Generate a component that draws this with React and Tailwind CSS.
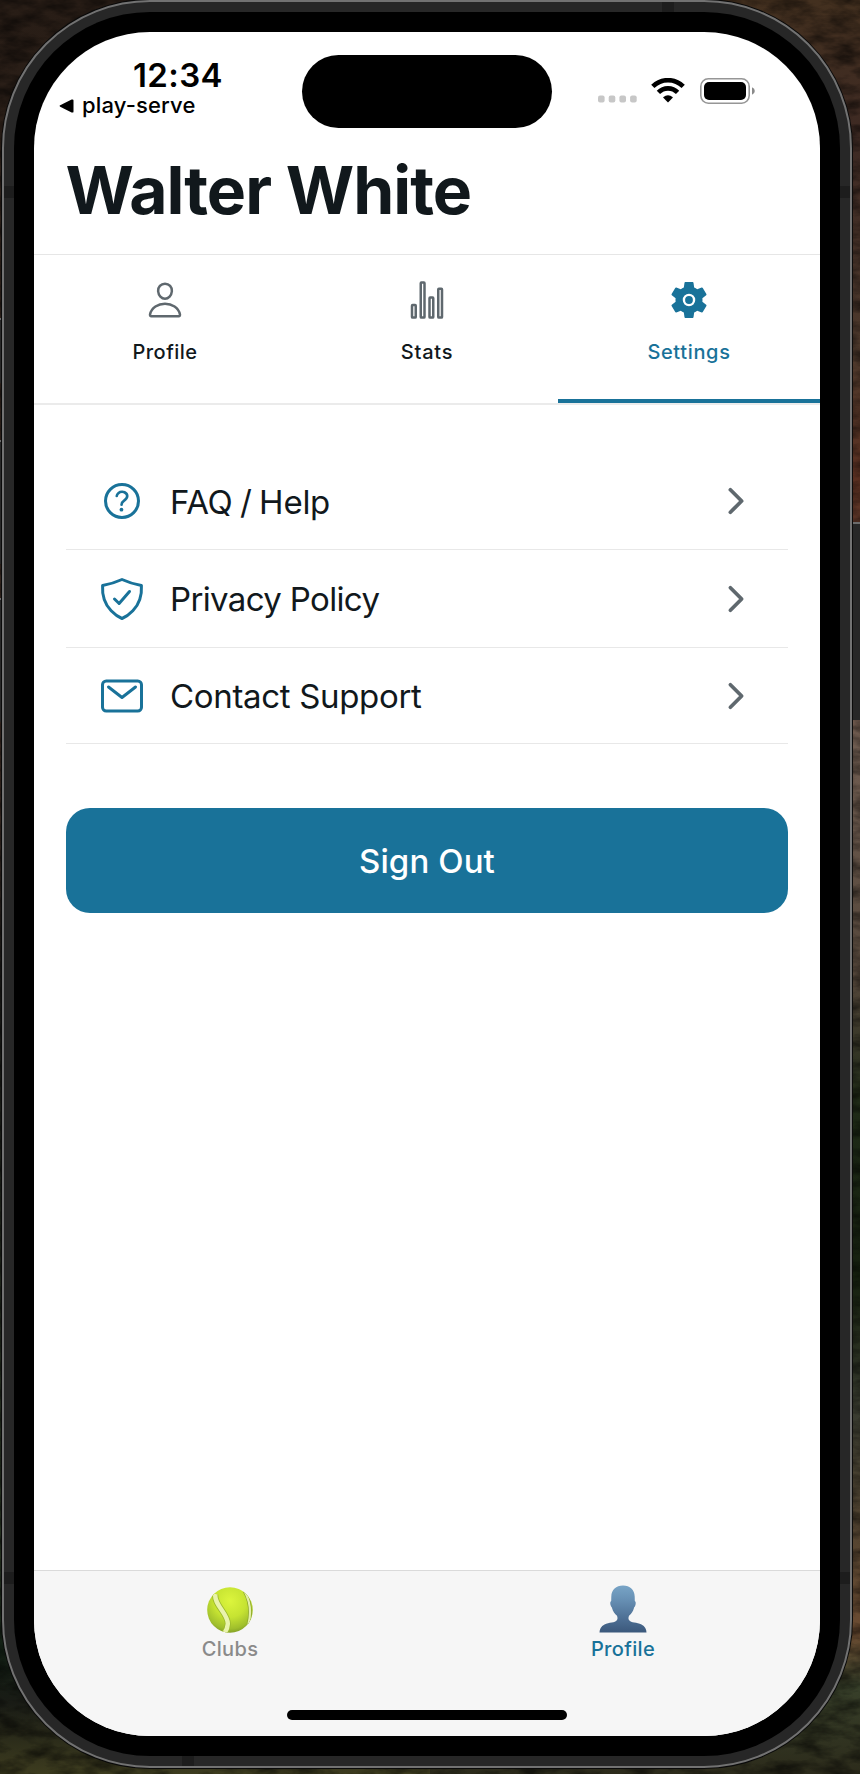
import {
  IoPersonOutline,
  IoStatsChartOutline,
  IoSettingsSharp,
  IoHelpCircleOutline,
  IoShieldCheckmarkOutline,
  IoMailOutline,
  IoChevronForward,
} from "react-icons/io5";

function Wallpaper() {
  return (
    <svg className="absolute inset-0" width="860" height="1774" viewBox="0 0 860 1774">
      <defs>
        <linearGradient id="wallLeft" x1="0" y1="0" x2="0" y2="1">
          <stop offset="0" stopColor="#281d16" />
          <stop offset="0.45" stopColor="#35261f" />
          <stop offset="0.55" stopColor="#171614" />
          <stop offset="0.88" stopColor="#24301f" />
          <stop offset="0.93" stopColor="#121f14" />
          <stop offset="0.96" stopColor="#191b15" />
          <stop offset="1" stopColor="#3d3c1f" />
        </linearGradient>
        <linearGradient id="wallRight" x1="0" y1="0" x2="0" y2="1">
          <stop offset="0" stopColor="#43301f" />
          <stop offset="0.08" stopColor="#3d2923" />
          <stop offset="0.2" stopColor="#4d392c" />
          <stop offset="0.27" stopColor="#5a2f20" />
          <stop offset="0.42" stopColor="#6f5c50" />
          <stop offset="0.55" stopColor="#54463a" />
          <stop offset="0.62" stopColor="#1f2a17" />
          <stop offset="0.72" stopColor="#15200f" />
          <stop offset="0.8" stopColor="#3a3c30" />
          <stop offset="0.92" stopColor="#6b4b31" />
          <stop offset="0.95" stopColor="#38402a" />
          <stop offset="1" stopColor="#2c2b1b" />
        </linearGradient>
        <filter id="rock" x="0" y="0" width="100%" height="100%">
          <feTurbulence type="fractalNoise" baseFrequency="0.035 0.08" numOctaves="4" seed="7" />
          <feColorMatrix values="0 0 0 0 0  0 0 0 0 0  0 0 0 0 0  2.2 0 0 0 -0.8" />
        </filter>
      </defs>
      <rect width="430" height="1774" fill="url(#wallLeft)" />
      <rect x="430" width="430" height="1774" fill="url(#wallRight)" />
      <rect width="860" height="1774" filter="url(#rock)" opacity="0.55" />
    </svg>
  );
}

function SideButtons() {
  return (
    <>
      <div className="absolute left-0 top-[318px] h-[65px] w-[3px] border-t-2 border-[#6b6b6b] bg-[#272727]" />
      <div className="absolute left-0 top-[440px] h-[124px] w-[3px] border-t-2 border-[#6b6b6b] bg-[#272727]" />
      <div className="absolute left-0 top-[598px] h-[124px] w-[3px] border-t-2 border-[#6b6b6b] bg-[#272727]" />
      <div className="absolute right-0 top-[522px] h-[198px] w-[9px] border-t-2 border-[#6b6b6b] bg-[#272727]" />
    </>
  );
}

function AntennaBands() {
  return (
    <>
      <div className="absolute left-0 top-[184px] h-3 w-[10px] bg-[#1d1d1d]" />
      <div className="absolute right-0 top-[184px] h-3 w-[10px] bg-[#1d1d1d]" />
      <div className="absolute left-0 top-[1570px] h-3 w-[10px] bg-[#1d1d1d]" />
      <div className="absolute right-0 top-[1570px] h-3 w-[10px] bg-[#1d1d1d]" />
      <div className="absolute left-[658px] top-0 h-[10px] w-3 bg-[#1d1d1d]" />
      <div className="absolute bottom-0 left-[178px] h-[10px] w-3 bg-[#1d1d1d]" />
    </>
  );
}

function StatusBar() {
  return (
    <div className="flex h-[104px] shrink-0 text-black">
      <div className="w-[268px] pt-[25px]">
        <div className="pl-[99px] text-[33px] font-semibold leading-9 tracking-[0.37px]">12:34</div>
        <div className="flex items-center pl-[25px] text-[22px] font-medium leading-[25px] tracking-[0.15px]">
          <svg width="15" height="14" viewBox="0 0 15 14" className="mr-2">
            <path d="M1.2 6.3 12.6.6Q14.5-.1 14.5 1.6V12.4Q14.5 14.1 12.6 13.4L1.2 7.7Q0 7 1.2 6.3Z" fill="#000" />
          </svg>
          play-serve
        </div>
      </div>
      <div className="mt-[22.5px] h-[73.5px] w-[250px] rounded-full bg-black" />
      <div className="flex pl-[46px] pt-[46px]">
        <svg width="40" height="8" viewBox="0 0 40 8" className="mt-[17px]" fill="#c7c7c7">
          <rect x="0" y="0.6" width="6.6" height="7" rx="2" />
          <rect x="10.7" y="0.6" width="6.6" height="7" rx="2" />
          <rect x="21.4" y="0.6" width="6.6" height="7" rx="2" />
          <rect x="32.1" y="0.6" width="6.6" height="7" rx="2" />
        </svg>
        <svg width="34" height="25" viewBox="0 0 34 25" className="ml-[13px]" fill="none" stroke="#000" strokeWidth="4.6">
          <path d="M1.8 8.4A21.6 21.6 0 0 1 32.2 8.4" />
          <path d="M7.4 14.4A13.4 13.4 0 0 1 26.6 14.4" />
          <path d="M17 24.6 12.3 19.8Q12 19.4 12.5 18.9A6.8 6.8 0 0 1 21.5 18.9Q22 19.4 21.7 19.8Z" fill="#000" stroke="none" />
        </svg>
        <svg width="56" height="26" viewBox="0 0 56 26" className="ml-[15px] -mt-[0.5px]">
          <rect x="0.8" y="0.8" width="48.4" height="24.4" rx="7.6" fill="none" stroke="#969696" strokeWidth="1.6" />
          <rect x="4" y="4" width="42" height="18" rx="5" fill="#000" />
          <path d="M52 9.2Q54.8 10.3 54.8 13T52 16.8Z" fill="#8a8a8a" />
        </svg>
      </div>
    </div>
  );
}

function Gear() {
  return (
    <svg width="40" height="40" viewBox="0 0 40 40" fill="#197299">
      <IoSettingsSharp size={40} color="#197299" />
      <circle cx="20" cy="20" r="3.9" />
    </svg>
  );
}

const tabs = [
  { label: "Profile", icon: <IoPersonOutline size={40} className="text-[#5f686e]" />, style: "text-[#11181c] tracking-[0.5px]" },
  { label: "Stats", icon: <IoStatsChartOutline size={40} className="text-[#5f686e]" />, style: "text-[#11181c] tracking-[0.8px]" },
  { label: "Settings", icon: <Gear />, style: "text-[#197299] tracking-[0.65px]", active: true },
];

const rows = [
  {
    label: "FAQ / Help",
    Icon: IoHelpCircleOutline,
    height: "h-[98px]",
    text: "pt-[3px] tracking-[-0.25px] [word-spacing:-1.6px]",
  },
  { label: "Privacy Policy", Icon: IoShieldCheckmarkOutline, height: "h-[98px]", text: "pt-px tracking-[-0.65px]" },
  { label: "Contact Support", Icon: IoMailOutline, height: "h-[96px]", text: "pt-px tracking-[-0.33px]" },
];

function TennisBall() {
  return (
    <svg width="46" height="46" viewBox="0 0 46 46">
      <defs>
        <radialGradient id="ball" cx="0.5" cy="0.3" r="0.72">
          <stop offset="0" stopColor="#dcf53d" />
          <stop offset="0.5" stopColor="#c6e332" />
          <stop offset="0.85" stopColor="#9fbe2c" />
          <stop offset="1" stopColor="#7d9a26" />
        </radialGradient>
        <clipPath id="ballEdge">
          <circle cx="23" cy="23" r="22.8" />
        </clipPath>
      </defs>
      <circle cx="23" cy="23" r="22.8" fill="url(#ball)" />
      <g clipPath="url(#ballEdge)" fill="none">
        <path d="M8.5 7C6 17 21.5 27 20.8 37C20.6 41 19.5 43 17.5 46" stroke="#9cb92c" strokeWidth="6" />
        <path d="M8.5 7C6 17 21.5 27 20.8 37C20.6 41 19.5 43 17.5 46" stroke="#e9f3ac" strokeWidth="4.4" />
        <path d="M37.5 4C43 14 44.5 25 41.5 37" stroke="#8aa628" strokeWidth="3.6" />
        <path d="M37.5 4C43 14 44.5 25 41.5 37" stroke="#e4efab" strokeWidth="2.2" />
      </g>
    </svg>
  );
}

function Bust() {
  return (
    <svg width="48" height="48" viewBox="0 0 48 48">
      <defs>
        <linearGradient id="bust" x1="0" y1="0" x2="0" y2="1">
          <stop offset="0" stopColor="#78a4c6" />
          <stop offset="0.3" stopColor="#6790b4" />
          <stop offset="0.7" stopColor="#4d6f94" />
          <stop offset="1" stopColor="#3b587b" />
        </linearGradient>
      </defs>
      <path
        d="M24 .6C31 .6 35.5 5 35.7 11.5L35.8 16C37 16.4 37 19 36.2 20.8C35.8 22 35.2 22 35 23C34 26.5 32.3 28.6 30 30.8C29.2 33 29.4 34 30 35C32 38 38 37.2 42.5 39.5C46 41.2 47.5 44.5 47.5 47.6H.5C.5 44.5 2 41.2 5.5 39.5C10 37.2 16 38 18 35C18.6 34 18.8 33 18 30.8C15.7 28.6 14 26.5 13 23C12.8 22 12.2 22 11.8 20.8C11 19 11 16.4 12.2 16L12.3 11.5C12.5 5 17 .6 24 .6Z"
        fill="url(#bust)"
      />
    </svg>
  );
}

function Screen() {
  return (
    <div className="flex h-full w-full flex-col overflow-hidden rounded-[116px] bg-white">
      <StatusBar />
      <header className="h-[119px] shrink-0 border-b border-[#e6e6e6] pl-[31.5px] pt-[18px]">
        <h1 className="text-[66px] font-bold leading-[72px] tracking-[-1px] text-[#11181c]">Walter White</h1>
      </header>
      <nav className="grid h-[150px] shrink-0 grid-cols-3 border-b-2 border-[#ebebeb]">
        {tabs.map((t) => (
          <div key={t.label} className="relative flex flex-col items-center pt-[24.5px]">
            <div className="pr-px">{t.icon}</div>
            <span className={`mt-[19px] text-[20px] font-medium leading-[26px] ${t.style}`}>{t.label}</span>
            {t.active && <div className="absolute inset-x-0 bottom-0 h-1 bg-[#197299]" />}
          </div>
        ))}
      </nav>
      <main className="flex flex-1 flex-col px-8 pt-[47px]">
        {rows.map(({ label, Icon, height, text }) => (
          <div key={label} className={`flex items-center border-b border-[#e8e8e8] px-8 ${height}`}>
            <Icon size={48} className="text-[#197299]" />
            <span className={`ml-6 flex-1 text-[33px] leading-10 text-[#11181c] ${text}`}>{label}</span>
            <IoChevronForward size={40} className="text-[#5f686e]" />
          </div>
        ))}
        <button className="mt-16 h-[105px] rounded-[24px] bg-[#197299] text-[33px] font-medium leading-10 tracking-[0.1px] text-white">
          Sign Out
        </button>
      </main>
      <footer className="flex h-[166px] shrink-0 flex-col items-center border-t border-[#dadada] bg-[#f6f6f6]">
        <div className="grid w-full grid-cols-2">
          <div className="flex flex-col items-center pr-px pt-4">
            <TennisBall />
            <span className="mt-[3px] text-[20px] font-medium leading-[26px] tracking-[0.35px] text-[#8a8a8a]">Clubs</span>
          </div>
          <div className="flex flex-col items-center pr-px pt-[14px]">
            <Bust />
            <span className="mt-[3px] text-[20px] font-medium leading-[26px] tracking-[0.35px] text-[#197299]">Profile</span>
          </div>
        </div>
        <div className="mb-4 mt-auto h-[10px] w-[280px] rounded-full bg-black" />
      </footer>
    </div>
  );
}

export default function App() {
  return (
    <div className="relative h-[1774px] w-[860px] overflow-hidden bg-[#1c1814] pl-[2px] font-['Inter',sans-serif]">
      <Wallpaper />
      <SideButtons />
      <div className="relative h-[1768px] w-[850px] rounded-[148px] border-2 border-[#727272] bg-[#272727] p-[10px] shadow-[0_0_0_1px_#0a0a0a]">
        <AntennaBands />
        <div className="h-full w-full rounded-[136px] bg-black p-5">
          <Screen />
        </div>
      </div>
    </div>
  );
}
